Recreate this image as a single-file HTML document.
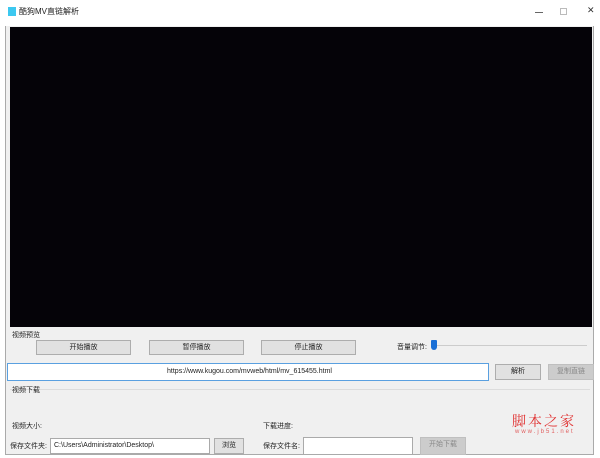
<!DOCTYPE html><html><head><style>
body{margin:0;width:600px;height:458px;background:#fff;font-family:"Liberation Sans","Noto Sans CJK SC",sans-serif;font-size:7px;color:#222;position:relative;overflow:hidden}
div{position:absolute;box-sizing:border-box}
.btn{background:#e1e1e1;border:1px solid #adadad;text-align:center;line-height:13px}
.dis{background:#ccc;border:1px solid #bfbfbf;color:#888;text-align:center;line-height:13px}
.inp{background:#fff;border:1px solid #7a7a7a;padding-left:3px;line-height:14px}
</style></head><body>
<div style="left:5px;top:0;width:589px;height:455px;border:1px solid #aaa;border-top:none;background:#f0f0f0"></div>
<div style="left:5px;top:0;width:589px;height:26px;background:#fff"></div>
<div style="left:8px;top:7px;width:8px;height:9px;background:#3cc8f0"></div>
<div style="left:19px;top:6px;font-size:8px;">酷狗MV直链解析</div>
<div style="left:535px;top:12px;width:8px;height:1px;background:#666"></div>
<div style="left:560px;top:8px;width:7px;height:7px;border:1px solid #bbb"></div>
<div style="left:587px;top:5px;font-size:9px;color:#333">✕</div>
<div style="left:10px;top:27px;width:582px;height:300px;background:#050308"></div>
<div style="left:12px;top:330px">视频预览</div>
<div class="btn" style="left:36px;top:340px;width:95px;height:15px">开始播放</div>
<div class="btn" style="left:149px;top:340px;width:95px;height:15px">暂停播放</div>
<div class="btn" style="left:261px;top:340px;width:95px;height:15px">停止播放</div>
<div style="left:397px;top:342px">音量调节:</div>
<div style="left:437px;top:345px;width:150px;height:1px;background:#ccc"></div>
<div style="left:431px;top:340px;width:6px;height:10px;background:#1a6fd6;border-radius:1px 1px 3px 3px"></div>
<div class="inp" style="left:7px;top:363px;width:482px;height:18px;border-color:#5aa0e0;text-align:center;line-height:16px">https://www.kugou.com/mvweb/html/mv_615455.html</div>
<div class="btn" style="left:495px;top:364px;width:46px;height:16px;line-height:14px">解析</div>
<div class="dis" style="left:548px;top:364px;width:46px;height:16px;line-height:14px">复制直链</div>
<div style="left:10px;top:389px;width:580px;height:1px;background:#dcdcdc"></div>
<div style="left:12px;top:385px">视频下载</div>
<div style="left:12px;top:421px">视频大小:</div>
<div style="left:263px;top:421px">下载进度:</div>
<div style="left:512px;top:411px;font-size:14px;color:#e03030;letter-spacing:2px;font-family:'Noto Serif CJK SC',serif">脚本之家</div>
<div style="left:515px;top:429px;font-size:6px;color:#e06060;letter-spacing:2px">www.jb51.net</div>
<div style="left:10px;top:441px">保存文件夹:</div>
<div class="inp" style="left:50px;top:438px;width:160px;height:16px;border-color:#aaa">C:\Users\Administrator\Desktop\</div>
<div class="btn" style="left:214px;top:438px;width:30px;height:16px">浏览</div>
<div style="left:263px;top:441px">保存文件名:</div>
<div class="inp" style="left:303px;top:437px;width:110px;height:18px;border-color:#aaa"></div>
<div class="dis" style="left:420px;top:437px;width:46px;height:18px">开始下载</div>
</body></html>
